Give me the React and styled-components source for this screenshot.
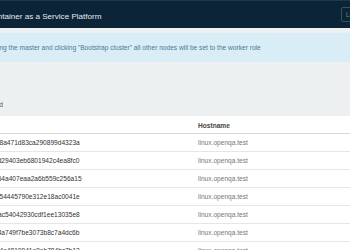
import React from "react";
import styled, { createGlobalStyle } from "styled-components";

const GlobalStyle = createGlobalStyle`
  html,
  body {
    margin: 0;
    padding: 0;
    overflow: hidden;
    background: #edf0f1;
    font-family: "Liberation Sans", Arial, sans-serif;
  }
`;

const Page = styled.div`
  width: 480px;
  margin-left: -70px;
`;

const Header = styled.header`
  height: 27px;
  display: flex;
  align-items: center;
  padding-left: 33px;
  background: #0b2438;
  border-top: 1px solid #22384a;
`;

const Brand = styled.h1`
  flex: 0 0 378px;
  margin: 0;
  padding-top: 3px;
  font-size: 8.1px;
  font-weight: 400;
  color: #e4e9ed;
`;

const LogoutButton = styled.button`
  height: 15px;
  margin-top: -1px;
  padding: 0 4px;
  border: 1px solid #2f5757;
  border-radius: 2px;
  background: transparent;
  color: #4f9a73;
  font-family: inherit;
  font-size: 6.6px;
`;

const Main = styled.main`
  padding-top: 5px;
`;

const Alert = styled.div`
  height: 29px;
  display: flex;
  align-items: center;
  padding-left: 35px;
  background: #d9edf7;
  color: #4a7a94;
  font-size: 6.6px;
`;

const SectionTitle = styled.h2`
  margin: 0;
  padding: 39px 0 8px 31px;
  font-size: 6.6px;
  font-weight: 400;
  color: #555;
`;

const Table = styled.div`
  background: #fff;
  font-size: 6.6px;
`;

const Row = styled.div`
  display: grid;
  grid-template-columns: 268px 1fr;
  align-items: center;
  height: ${(p) => (p.head ? "16px" : "17px")};
  border-bottom: 1px solid ${(p) => (p.head ? "#d8d8d8" : "#e6e6e6")};
  padding-top: ${(p) => (p.head ? "1px" : "0")};
`;

const Cell = styled.div`
  padding-left: ${(p) => (p.first ? "35px" : "0")};
  color: ${(p) => (p.head ? "#444" : p.first ? "#333" : "#777")};
  font-weight: ${(p) => (p.head ? 700 : 400)};
  white-space: nowrap;
`;

const nodes = [
  "b1f2c09e6d8a471d83ca290899d4323a",
  "7c3e5a1b0d29403eb6801942c4ea8fc0",
  "e96b2d07c54a407eaa2a6b559c256a15",
  "3a8f0c1e6d54445790e312e18ac0041e",
  "0d3e81b92ac54042930cdf1ee13035e8",
  "5b0e7d2c14a749f7be3073b8c7a4dc6b",
  "9c1f6a3b054e4810941e9eb784bc7b12",
];

export default function App() {
  return (
    <>
      <GlobalStyle />
      <Page>
        <Header>
          <Brand>SUSE Container as a Service Platform</Brand>
          <LogoutButton>Logout</LogoutButton>
        </Header>
        <Main>
          <Alert>
            After selecting the master and clicking "Bootstrap cluster" all other nodes will be set to the worker role
          </Alert>
          <SectionTitle>7 nodes found</SectionTitle>
          <Table>
            <Row head>
              <Cell first head>Machine ID</Cell>
              <Cell head>Hostname</Cell>
            </Row>
            {nodes.map((id) => (
              <Row key={id}>
                <Cell first>{id}</Cell>
                <Cell>linux.openqa.test</Cell>
              </Row>
            ))}
          </Table>
        </Main>
      </Page>
    </>
  );
}
